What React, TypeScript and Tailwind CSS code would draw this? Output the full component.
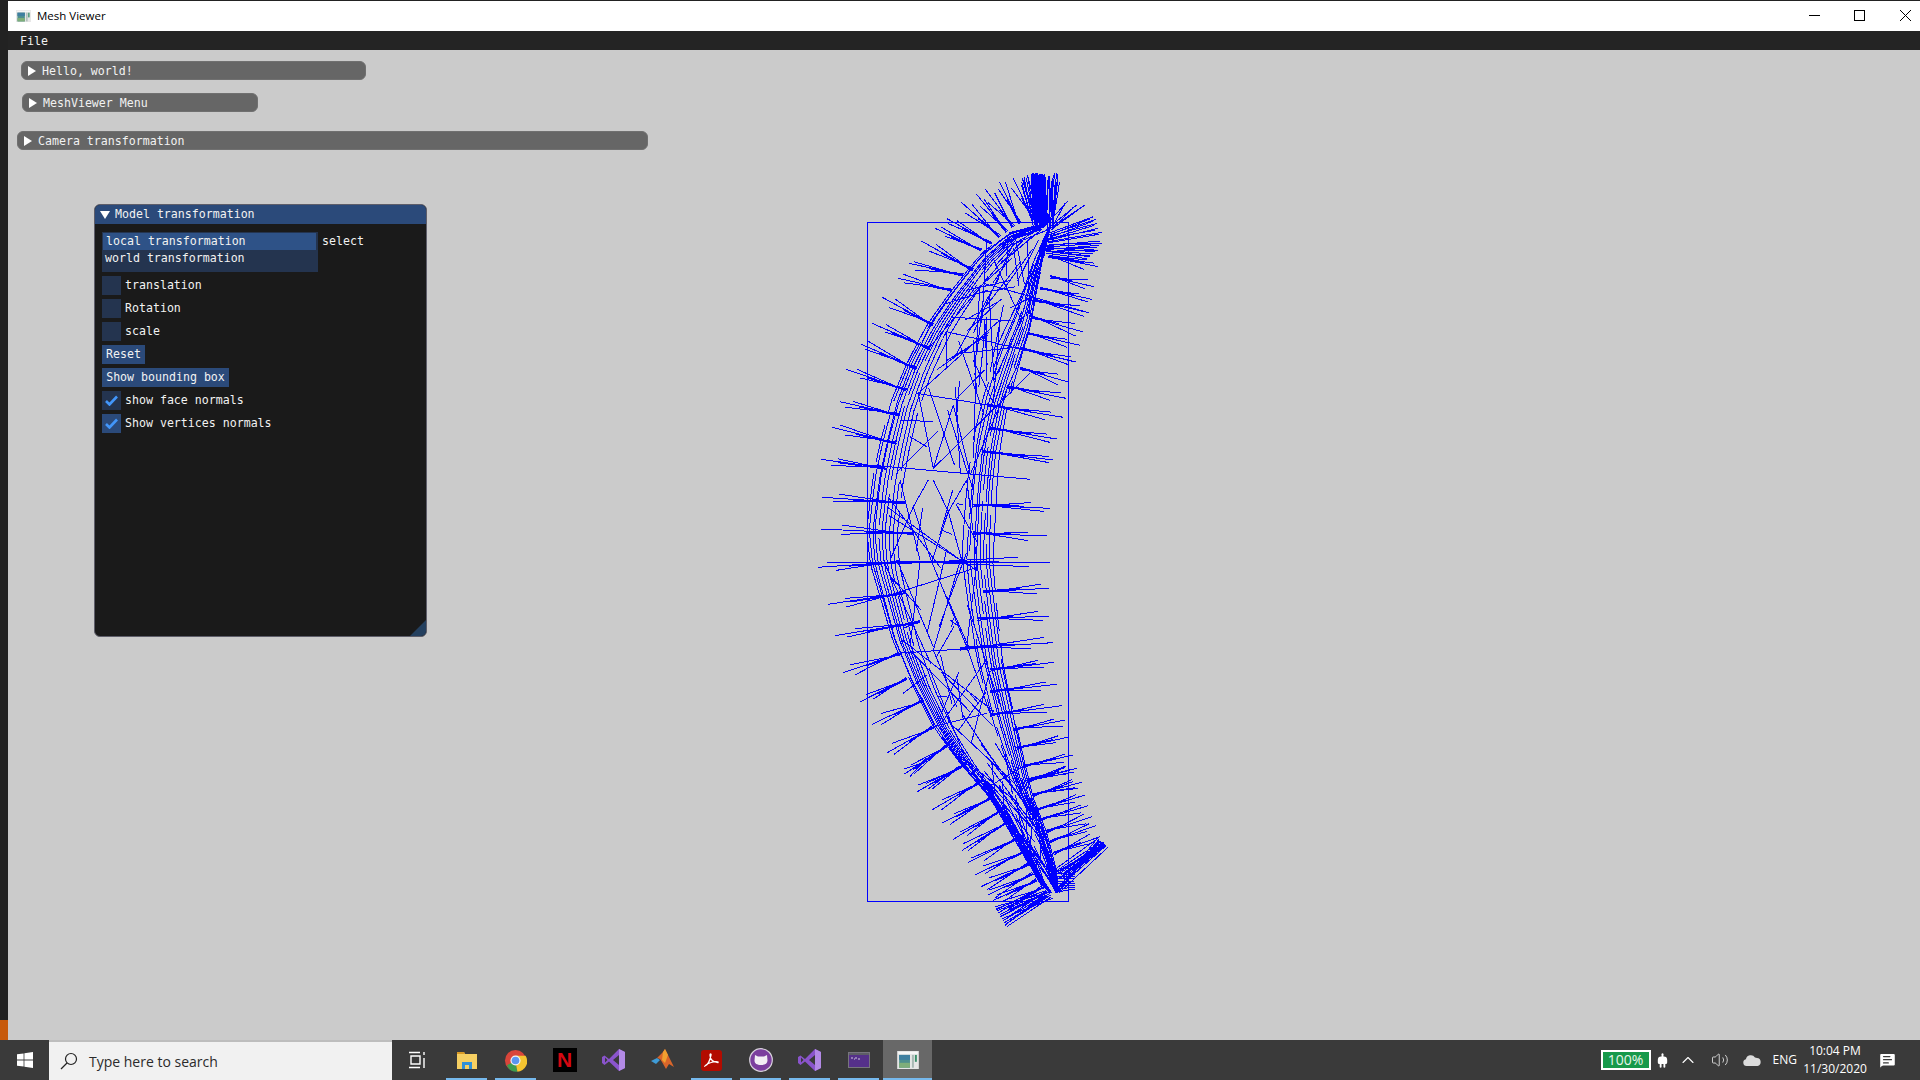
import { ReactNode } from "react";
import { ChevronUp, Volume2, Plug, MessageSquareText } from "lucide-react";

type Pt = [number, number];
type Seg = [number, number, number, number];

// tiny seeded random so the mesh is the same on every render
function makeRand(seed: number) {
    let s = seed;
    return () => {
        s = (s + 0x6d2b79f5) | 0;
        let t = Math.imul(s ^ (s >>> 15), 1 | s);
        t = (t + Math.imul(t ^ (t >>> 7), 61 | t)) ^ t;
        return ((t ^ (t >>> 14)) >>> 0) / 4294967296;
    };
}

const leftCurve: Pt[] = [
    [1047, 223], [1007, 233], [980, 253], [950, 290], [927, 323], [907, 363], [893, 400], [883, 440], [875, 477],
    [868, 530], [870, 563], [880, 600], [890, 637], [907, 677], [933, 727], [960, 763], [990, 797], [1017, 843], [1040, 883], [1050, 893],
];
const rightCurve: Pt[] = [
    [1050, 228], [1038, 283], [1030, 327], [1020, 360], [1007, 407], [1000, 450], [997, 490], [995, 530], [993, 563],
    [997, 613], [1003, 667], [1017, 730], [1024, 760], [1033, 797], [1047, 833], [1057, 873], [1058, 893],
];

function along(curve: Pt[], t: number): Pt {
    const f = Math.min(t, 0.9999) * (curve.length - 1);
    const i = Math.floor(f);
    const k = f - i;
    return [curve[i][0] + (curve[i + 1][0] - curve[i][0]) * k, curve[i][1] + (curve[i + 1][1] - curve[i][1]) * k];
}

function bandPoint(t: number, u: number): Pt {
    const a = along(leftCurve, t);
    const b = along(rightCurve, t);
    return [a[0] + (b[0] - a[0]) * u, a[1] + (b[1] - a[1]) * u];
}

// hand-read from the crops: crop coords -> page coords
const top = (x: number, y: number): Pt => [800 + x / 3, 160 + y / 3];
const mid = (x: number, y: number): Pt => [800 + x / 3, 480 + y / 3];
const low = (x: number, y: number): Pt => [900 + x / 3, 760 + y / 3];

const normals: [Pt, Pt][] = [
    [top(63, 898), top(260, 925)], [top(97, 802), top(290, 850)], [top(120, 725), top(300, 765)], [top(138, 628), top(320, 690)],
    [top(182, 552), top(350, 625)], [top(216, 490), top(390, 565)], [top(247, 412), top(400, 495)], [top(293, 355), top(455, 390)],
    [top(327, 310), top(490, 345)], [top(364, 243), top(520, 330)], [top(405, 205), top(545, 270)], [top(441, 176), top(575, 250)],
    [top(484, 127), top(600, 230)], [top(530, 103), top(620, 215)], [top(556, 88), top(640, 200)], [top(598, 65), top(660, 190)],
    [top(640, 55), top(700, 180)],
    [top(882, 380), top(750, 350)], [top(875, 418), top(720, 385)], [top(866, 458), top(700, 420)], [top(850, 516), top(690, 470)],
    [top(840, 556), top(680, 520)], [top(827, 606), top(660, 565)], [top(808, 667), top(660, 625)], [top(798, 715), top(620, 680)],
    [top(790, 772), top(560, 735)], [top(770, 837), top(570, 805)], [top(760, 900), top(550, 875)], [top(895, 320), top(745, 290)],
    [mid(66, 52), mid(315, 68)], [mid(63, 147), mid(340, 160)], [mid(54, 262), mid(300, 245)], [mid(85, 373), mid(315, 338)],
    [mid(105, 467), mid(360, 425)], [mid(130, 578), mid(300, 520)], [mid(181, 665), mid(320, 595)], [mid(216, 733), mid(370, 660)],
    [mid(262, 818), mid(400, 740)], [mid(313, 882), mid(450, 790)], [mid(352, 935), mid(500, 850)],
    [mid(750, 85), mid(520, 75)], [mid(740, 168), mid(520, 160)], [mid(750, 247), mid(290, 247)], [mid(747, 325), mid(550, 335)],
    [mid(747, 408), mid(532, 417)], [mid(758, 488), mid(480, 505)], [mid(762, 547), mid(570, 570)], [mid(770, 613), mid(570, 635)],
    [mid(785, 677), mid(570, 705)], [mid(795, 720), mid(640, 750)], [mid(803, 772), mid(650, 805)], [mid(818, 825), mid(670, 860)],
    [mid(830, 865), mid(680, 905)], [mid(845, 907), mid(700, 945)],
    [low(13, 42), low(80, 0)], [low(52, 95), low(180, 20)], [low(95, 150), low(250, 60)], [low(125, 190), low(280, 110)],
    [low(160, 238), low(320, 140)], [low(185, 272), low(330, 180)], [low(205, 307), low(360, 230)], [low(225, 345), low(380, 270)],
    [low(243, 380), low(390, 310)], [low(263, 405), low(400, 340)], [low(278, 422), low(410, 360)], [low(287, 450), low(430, 380)],
    [low(300, 470), low(440, 395)],
    [low(530, 25), low(380, 60)], [low(545, 67), low(400, 105)], [low(555, 105), low(410, 150)], [low(565, 137), low(420, 180)],
    [low(575, 170), low(440, 215)], [low(587, 197), low(450, 245)], [low(600, 230), low(460, 280)],
];

const ribs: [Pt, Pt][] = [
    [top(440, 515), top(827, 606)], [top(550, 370), top(866, 458)], [top(350, 700), top(790, 772)], [top(210, 915), top(690, 958)],
    [top(355, 700), top(400, 925)], [top(355, 700), top(600, 480)], [top(460, 735), top(510, 940)], [top(460, 735), top(400, 925)],
    [top(600, 480), top(580, 730)], [top(520, 600), top(575, 720)], [top(440, 515), top(440, 620)], [top(520, 540), top(530, 700)],
    [top(510, 945), top(650, 620)], [top(400, 925), top(690, 640)], [top(330, 830), top(380, 860)], [top(560, 240), top(545, 490)],
    [top(700, 330), top(590, 560)], [top(640, 250), top(520, 520)], [top(390, 560), top(610, 300)], [top(300, 780), top(400, 785)],
    [mid(340, 80), mid(270, 240)], [mid(340, 80), mid(395, 245)], [mid(445, 95), mid(395, 245)], [mid(445, 95), mid(485, 240)],
    [mid(300, 0), mid(360, 240)], [mid(500, 0), mid(445, 95)], [mid(385, 0), mid(340, 80)], [mid(400, 0), mid(445, 95)],
    [mid(500, 0), mid(530, 240)], [mid(395, 245), mid(500, 500)], [mid(480, 245), mid(400, 510)], [mid(295, 250), mid(400, 500)],
    [mid(360, 245), mid(330, 500)], [mid(530, 250), mid(500, 500)], [mid(290, 520), mid(590, 500)], [mid(400, 740), mid(560, 700)],
    [mid(440, 350), mid(510, 510)], [mid(400, 510), mid(470, 680)], [mid(500, 500), mid(570, 700)], [mid(490, 720), mid(470, 590)],
    [mid(450, 420), mid(470, 435)], [mid(460, 415), mid(455, 440)], [mid(430, 152), mid(455, 163)], [mid(470, 70), mid(490, 75)],
    [mid(410, 650), mid(440, 650)], [mid(510, 640), mid(535, 670)], [mid(310, 640), mid(380, 585)], [mid(310, 445), mid(360, 425)],
];

function buildMesh() {
    const rand = makeRand(7);
    const segs: Seg[] = [];
    const push = (a: Pt, b: Pt) => segs.push([a[0], a[1], b[0], b[1]]);

    // normals: a spine, one close neighbour that thickens it, and thin ones fanning out at the tip
    for (const [tip, base] of normals) {
        push(tip, base);
        const dx = base[0] - tip[0];
        const dy = base[1] - tip[1];
        const len = Math.hypot(dx, dy);
        const px = -dy / len;
        const py = dx / len;
        const from = 0.25 + rand() * 0.3;
        push([tip[0] + dx * from + px, tip[1] + dy * from + py], [base[0] + px, base[1] + py]);
        for (let i = 0; i < 2; i++) {
            const off = (i === 0 ? -1 : 1) * (2.5 + rand() * 3.5);
            const start = 0.06 + rand() * 0.2;
            push([tip[0] + dx * start + px * off, tip[1] + dy * start + py * off], [base[0] - px * off * 0.3, base[1] - py * off * 0.3]);
        }
    }

    // fan at the top, solid in the middle
    for (let i = 0; i < 30; i++) {
        const tx = 665 + rand() * 115;
        push(top(tx, 38 + rand() * 30), top(tx * 0.5 + 360 + rand() * 20, 185 + rand() * 25));
    }
    for (let i = 0; i < 24; i++) {
        const x = 695 + i * 1.7;
        push(top(x, 38 + rand() * 8), top(x + rand() * 8, 195));
    }
    // fan to the upper right, running back into the body
    const rightTips: Pt[] = [
        top(805, 122), top(830, 135), top(855, 135), top(880, 170), top(888, 178), top(892, 190), top(905, 217),
        top(895, 205), top(905, 250), top(900, 243), top(895, 270), top(890, 262), top(870, 290), top(860, 300), top(880, 282),
    ];
    for (const t of rightTips) {
        const by = 195 + ((t[1] - 200) * 3) * 0.45;
        push(t, top(725 + rand() * 30, by + rand() * 12));
        push([t[0] - 3, t[1] + 2], top(735 + rand() * 25, by + rand() * 16));
    }
    // fans at the bottom
    for (let i = 0; i < 14; i++) {
        const k = i / 13;
        push(low(590 + 30 * k + rand() * 4, 234 + 28 * k), low(445 + rand() * 40, 330 + rand() * 70));
    }
    for (let i = 0; i < 6; i++) {
        push(low(612 + i, 248 + i * 2), low(480 + i * 3, 340 + i * 5));
    }
    for (let i = 0; i < 11; i++) {
        const k = i / 10;
        push(low(285 + 35 * k, 440 + 60 * k), low(420 + rand() * 40, 380 + rand() * 35));
    }
    for (let i = 0; i < 5; i++) {
        push(low(314 + i * 3, 497 - i * 3), low(430 + i * 4, 405 + i));
    }
    for (let i = 0; i < 8; i++) {
        push(low(470, 340 + i * 8), low(525, 345 + i * 6));
    }

    // the strands on both sides of the crescent
    const strands = [0, 0.02, 0.04, 0.065, 0.09, 0.115, 0.14, 0.17, 0.2, 0.24, 0.76, 0.79, 0.82, 0.85, 0.875, 0.9, 0.925, 0.95, 0.975, 1];
    for (const u of strands) {
        const wob = rand() * 0.02;
        for (let i = 0; i < 60; i++) {
            const a = bandPoint(i / 60, u + wob * Math.sin(i / 5));
            const b = bandPoint((i + 1) / 60, u + wob * Math.sin((i + 1) / 5));
            if (rand() > 0.06) push(a, b);
        }
    }
    // extra strands in the narrow lower part
    for (let i = 0; i < 34; i++) {
        const t = 0.72 + rand() * 0.2;
        push(bandPoint(t, rand()), bandPoint(t + 0.05 + rand() * 0.07, rand()));
    }
    for (const [a, b] of ribs) push(a, b);

    // interior triangles
    for (let i = 0; i < 46; i++) {
        const t = 0.06 + rand() * 0.7;
        push(bandPoint(t, 0.1 + rand() * 0.8), bandPoint(t + 0.04 + rand() * 0.09, 0.1 + rand() * 0.8));
    }
    // a few long ones near the top where it gets busy
    for (let i = 0; i < 24; i++) {
        const t = rand() * 0.18;
        push(bandPoint(t, rand()), bandPoint(t + 0.03 + rand() * 0.05, rand()));
    }
    return segs.map((s) => `M${s[0].toFixed(1)} ${s[1].toFixed(1)}L${s[2].toFixed(1)} ${s[3].toFixed(1)}`).join("");
}

const meshPath = buildMesh();

function Triangle({ open }: { open?: boolean }) {
    return (
        <svg width="10" height="10" viewBox="0 0 10 10" className="shrink-0">
            {open ? <path d="M0 1h10L5 9z" fill="#fff" /> : <path d="M1 0l8 5-8 5z" fill="#fff" />}
        </svg>
    );
}

function CollapsedWindow({ className, label }: { className: string; label: string }) {
    return (
        <div className={`absolute flex h-[19px] items-center gap-[5px] rounded-[6px] border border-[#707070] bg-[#666666] pl-[5px] text-[#f2f2f2] ${className}`}>
            <Triangle />
            <span className="pt-[2px]">{label}</span>
        </div>
    );
}

function CheckRow({ label, checked, hot }: { label: string; checked?: boolean; hot?: boolean }) {
    return (
        <div className="flex h-[19px] items-center gap-[4px]">
            <div className={`flex h-[19px] w-[19px] items-center justify-center ${hot ? "bg-[#2b4a7a]" : "bg-[#24344f]"}`}>
                {checked && (
                    <svg width="13" height="11" viewBox="0 0 13 11">
                        <path d="M1 6l3.5 3.5L12 1.5" fill="none" stroke="#4296fa" strokeWidth="2.6" />
                    </svg>
                )}
            </div>
            <span>{label}</span>
        </div>
    );
}

function ModelWindow() {
    return (
        <div className="absolute left-[86px] top-[154px] flex h-[433px] w-[333px] flex-col overflow-hidden rounded-[6px] border border-[#5e5e6a] bg-[#1a1a1a] text-[#f2f2f2]">
            <div className="flex h-[19px] shrink-0 items-center gap-[5px] bg-[#2b4a7a] pl-[5px]">
                <Triangle open />
                <span>Model transformation</span>
            </div>
            <div className="flex flex-col gap-[4px] pl-[7px] pt-[8px]">
                <div className="flex items-start gap-[4px]">
                    <div className="h-[40px] w-[216px] bg-[#24344f] p-[1px] pr-[2px]">
                        <div className="flex h-[17px] items-center bg-[#2e5287] pl-[3px]">local transformation</div>
                        <div className="flex h-[17px] items-center pl-[2px]">world transformation</div>
                    </div>
                    <span className="flex h-[19px] items-center">select</span>
                </div>
                <CheckRow label="translation" />
                <CheckRow label="Rotation" />
                <CheckRow label="scale" />
                <div className="flex h-[19px] w-[43px] items-center justify-center bg-[#2b4a7a]">Reset</div>
                <div className="flex h-[19px] w-[127px] items-center justify-center bg-[#2b4a7a]">Show bounding box</div>
                <CheckRow label="show face normals" checked />
                <CheckRow label="Show vertices normals" checked hot />
            </div>
            <div className="absolute bottom-0 right-0 h-0 w-0 border-b-[16px] border-l-[16px] border-b-[#24405f] border-l-transparent" />
        </div>
    );
}

function WindowsLogo() {
    return (
        <svg width="16" height="16" viewBox="0 0 16 16" fill="#fff">
            <path d="M0 2.3l6.6-.9v6.2H0zM7.4 1.3L16 0v7.6H7.4zM0 8.4h6.6v6.2L0 13.7zM7.4 8.4H16V16l-8.6-1.2z" />
        </svg>
    );
}

function AppButton({ children, running, active }: { children: ReactNode; running?: boolean; active?: boolean }) {
    return (
        <div className={`relative flex h-full w-[49px] items-center justify-center ${active ? "bg-[#686868]" : ""}`}>
            {children}
            {running && <span className={`absolute bottom-0 h-[2px] bg-[#76b9ed] ${active ? "inset-x-0" : "inset-x-[4px]"}`} />}
        </div>
    );
}

function VsIcon() {
    return (
        <svg width="24" height="24" viewBox="0 0 24 24">
            <path d="M17 1l6 3v16l-6 3-10-9.500-4.500 3.500L0 15V9l2.500-1.500L7 11z" fill="#8a54cc" />
            <path d="M17 1l6 3v16l-6 3z" fill="#b38ae6" />
            <path d="M17 7l-6 5 6 5zM3 9.500v5l2.500-2.500z" fill="#3a3a3a" />
        </svg>
    );
}

function WindowIcon({ size }: { size: number }) {
    return (
        <svg width={size} height={size * 0.85} viewBox="0 0 22 19">
            <rect x="0" y="0" width="22" height="19" fill="#e6e6e6" />
            <rect x="1" y="1" width="20" height="2" fill="#f7f7f7" />
            <rect x="2" y="4" width="11" height="13" fill="#4f8f8f" />
            <rect x="2" y="4" width="11" height="5" fill="#3f7fa0" />
            <rect x="2" y="12" width="11" height="5" fill="#7fae7a" />
            <rect x="15" y="4" width="2" height="13" fill="#a9b9b5" />
            <rect x="18" y="4" width="2" height="7" fill="#3a8f6a" />
        </svg>
    );
}

function Taskbar() {
    return (
        <div className="flex h-[40px] shrink-0 items-center bg-[#3a3a3a] text-white">
            <div className="flex h-full w-[49px] items-center justify-center">
                <WindowsLogo />
            </div>
            <div className="flex h-full w-[343px] items-center gap-[11px] border-t-2 border-[#bdbdbd] bg-[#f1f1f1] pl-[11px]">
                <svg width="18" height="18" viewBox="0 0 18 18" fill="none" stroke="#222" strokeWidth="1.2">
                    <circle cx="11" cy="7" r="5.500" />
                    <path d="M7 11l-6 6" />
                </svg>
                <span className="font-['Open_Sans',sans-serif] text-[14px] text-[#2b2b2b]">Type here to search</span>
            </div>
            <div className="flex h-full w-[50px] items-center justify-center">
                <svg width="18" height="18" viewBox="0 0 18 18" fill="none" stroke="#fff" strokeWidth="1.4">
                    <path d="M1 1.500h11M1 16.500h11M3 5h9v8H3zM16 1v3M16 7v10" />
                </svg>
            </div>
            <AppButton running>
                <svg width="22" height="20" viewBox="0 0 22 20">
                    <path d="M1 2h7l1 2h12v15H1z" fill="#f6cf62" />
                    <path d="M1 2h7l1 2H1z" fill="#d99a25" />
                    <path d="M6 19v-7h10v7h-3v-4H9v4z" fill="#2f8fd8" />
                </svg>
            </AppButton>
            <AppButton running>
                <svg width="23" height="23" viewBox="0 0 24 24">
                    <circle cx="12" cy="12" r="11" fill="#d8453a" />
                    <path d="M12 12L3 17a11 11 0 0 0 11 6.800z" fill="#3d9c4f" />
                    <path d="M12 7h10.500a11 11 0 0 1-8.500 16.800L12 12z" fill="#f4c430" />
                    <circle cx="12" cy="12" r="5.300" fill="#f2f2f2" />
                    <circle cx="12" cy="12" r="4" fill="#5a95f0" />
                </svg>
            </AppButton>
            <AppButton>
                <div className="flex h-[24px] w-[24px] items-center justify-center bg-black font-['Liberation_Sans',sans-serif] text-[21px] font-bold text-[#d40812]">N</div>
            </AppButton>
            <AppButton>
                <VsIcon />
            </AppButton>
            <AppButton>
                <svg width="23" height="22" viewBox="0 0 23 22">
                    <path d="M0 12l6-3 3 2-4 4z" fill="#3f9bd6" />
                    <path d="M6 9l6-6 2-3 3 6 6 12-5-3-3 5-4-7-2-3z" fill="#d8652a" />
                    <path d="M12 3l2-3 3 6-3 8-3-3z" fill="#f0a030" />
                </svg>
            </AppButton>
            <AppButton running>
                <div className="flex h-[21px] w-[21px] items-center justify-center rounded-[3px] bg-[#b30b00]">
                    <svg width="15" height="15" viewBox="0 0 15 15" fill="none" stroke="#fff" strokeWidth="1.3">
                        <path d="M1 13c3-1 5-6 6-11 .3-1.500-1-1.500-1 0 0 4 3 7 8 7.500.8-.8-3-1.500-7 0-3 1-5 2-6 3.500z" />
                    </svg>
                </div>
            </AppButton>
            <AppButton running>
                <svg width="24" height="24" viewBox="0 0 24 24">
                    <circle cx="12" cy="12" r="11.300" fill="#7b3f9e" stroke="#d8d2dc" strokeWidth="1.200" />
                    <path d="M6 7l3 1.500h6L18 7l.5 5.500c0 3-2.500 4.500-6.500 4.500s-6.500-1.500-6.500-4.500z" fill="#f2eef4" />
                </svg>
            </AppButton>
            <AppButton running>
                <VsIcon />
            </AppButton>
            <AppButton running>
                <svg width="22" height="16" viewBox="0 0 22 16">
                    <rect x="0.500" y="0.500" width="21" height="15" fill="#55308a" stroke="#77757d" />
                    <rect x="1" y="1" width="20" height="2" fill="#5d5d66" />
                    <path d="M3 6h2M6 7h1M8 5v2M10 7h2" stroke="#cfc8de" strokeWidth="1" />
                </svg>
            </AppButton>
            <AppButton running active>
                <WindowIcon size={22} />
            </AppButton>
            <div className="flex-1" />
            <div className="mr-[4px] flex h-[20px] w-[50px] items-center justify-center border-2 border-white bg-[#17994a] font-['Open_Sans',sans-serif] text-[14px] leading-none text-[#e8f5ea]">100%</div>
            <Plug size={15} strokeWidth={3} className="rotate-180 fill-white text-white" />
            <ChevronUp size={20} strokeWidth={1.3} className="ml-[8px]" />
            <Volume2 size={18} strokeWidth={1} className="ml-[13px]" />
            <svg width="18" height="12" viewBox="0 0 18 12" className="ml-[14px]" fill="#dcdcdc">
                <path d="M3.500 12a3.400 3.400 0 0 1-.6-6.700A5 5 0 0 1 12 3.500a4.200 4.200 0 0 1 2 .6A4 4 0 0 1 14.500 12z" />
            </svg>
            <span className="ml-[12px] font-['Open_Sans',sans-serif] text-[12px]">ENG</span>
            <div className="ml-[8px] flex w-[60px] flex-col items-center font-['Open_Sans',sans-serif] text-[12px] leading-[18px]">
                <span>10:04 PM</span>
                <span>11/30/2020</span>
            </div>
            <MessageSquareText size={19} strokeWidth={1.6} className="ml-[13px] mr-[23px] fill-white text-[#3a3a3a]" />
        </div>
    );
}

export default function App() {
    return (
        <div className="flex h-screen w-full flex-col overflow-hidden bg-[#222222] font-['DejaVu_Sans_Mono',monospace] text-[11.6px]">
            <div className="flex min-h-0 flex-1">
                <div className="flex w-[8px] shrink-0 flex-col justify-end">
                    <div className="h-[20px] bg-[#c75a0c]" />
                </div>
                <div className="flex min-w-0 flex-1 flex-col pt-[1px]">
                    <div className="flex h-[30px] shrink-0 items-center bg-white pl-[8px] font-['Open_Sans',sans-serif] text-[11.500px] text-black">
                        <WindowIcon size={15} />
                        <span className="ml-[6px]">Mesh Viewer</span>
                        <div className="flex-1" />
                        <svg width="11" height="11" viewBox="0 0 11 11" className="mr-[34px] -translate-y-[1px]" stroke="#000" fill="none">
                            <path d="M0 5.500h11" />
                        </svg>
                        <svg width="11" height="11" viewBox="0 0 11 11" className="mr-[35px] -translate-y-[1px]" stroke="#000" fill="none">
                            <rect x="0.500" y="0.500" width="10" height="10" />
                        </svg>
                        <svg width="11" height="11" viewBox="0 0 11 11" className="mr-[9px] -translate-y-[1px]" stroke="#000" fill="none">
                            <path d="M0 0l11 11M11 0L0 11" />
                        </svg>
                    </div>
                    <div className="flex h-[19px] shrink-0 items-center bg-[#242424] pl-[12px] pt-[2px] text-[#f2f2f2]">File</div>
                    <div className="relative min-h-0 flex-1 bg-[#cbcbcb]">
                        <CollapsedWindow className="left-[13px] top-[11px] w-[345px]" label="Hello, world!" />
                        <CollapsedWindow className="left-[14px] top-[43px] w-[236px]" label="MeshViewer Menu" />
                        <CollapsedWindow className="left-[9px] top-[81px] w-[631px]" label="Camera transformation" />
                        <ModelWindow />
                        <svg width="340" height="780" viewBox="800 160 340 780" className="absolute left-[792px] top-[110px]">
                            <rect x="867.500" y="222.500" width="201" height="679" fill="none" stroke="#0000ff" strokeWidth="1" shapeRendering="crispEdges" />
                            <path d={meshPath} fill="none" stroke="#0000ff" strokeWidth="1" shapeRendering="crispEdges" />
                        </svg>
                    </div>
                </div>
            </div>
            <Taskbar />
        </div>
    );
}
